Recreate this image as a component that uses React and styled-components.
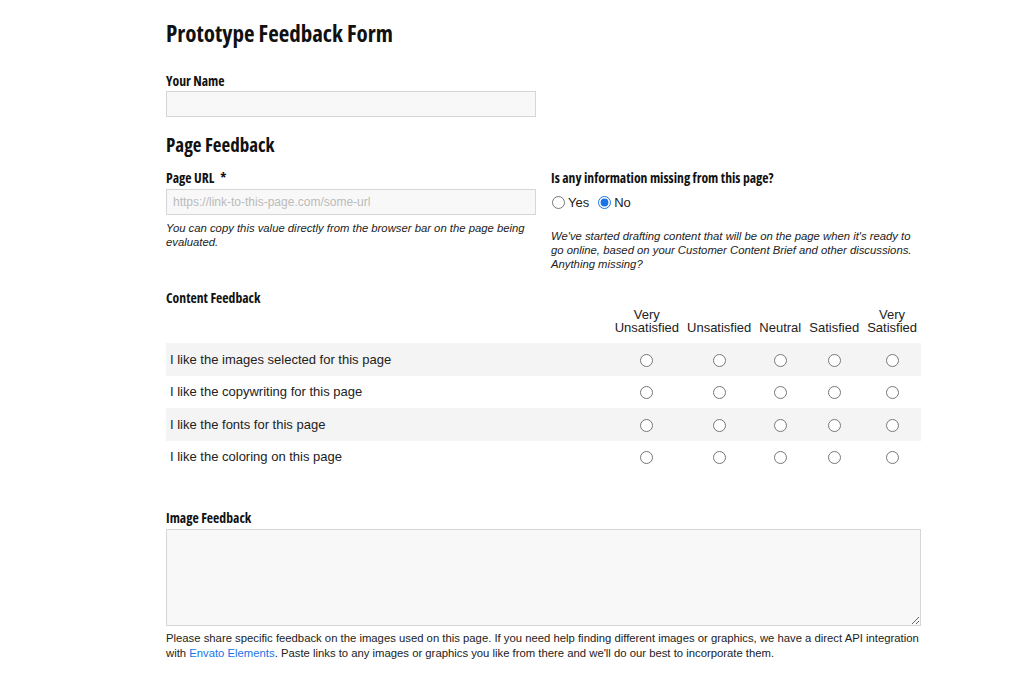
import styled, { createGlobalStyle } from "styled-components";

const GlobalStyle = createGlobalStyle`
	body {
		margin: 0;
		background: #fff;
		font-family: "Liberation Sans", Arial, sans-serif;
		color: #222;
	}
`;

const Page = styled.div`
	width: 755px;
	margin-left: 166px;
	padding-top: 19px;
	padding-bottom: 20px;
`;

const Title = styled.h1`
	margin: 0 0 25px;
	font-family: "Open Sans", sans-serif;
	font-stretch: 75%;
	font-weight: 700;
	font-size: 23px;
	line-height: 28px;
	color: #111;
`;

const SectionTitle = styled.h2`
	margin: 0 0 11px;
	font-family: "Open Sans", sans-serif;
	font-stretch: 75%;
	font-weight: 700;
	font-size: 19px;
	line-height: 26px;
	color: #111;
`;

const Label = styled.label`
	display: block;
	margin-bottom: ${(p) => (p.$mb !== undefined ? p.$mb : 2)}px;
	font-family: "Open Sans", sans-serif;
	font-stretch: 75%;
	font-weight: 700;
	font-size: 13.7px;
	line-height: 18px;
	color: #111;

	span {
		margin-left: 6px;
	}
`;

const Field = styled.div`
	margin-bottom: ${(p) => p.$mb || 0}px;
`;

const TextInput = styled.input`
	box-sizing: border-box;
	display: block;
	width: 370px;
	height: 26px;
	padding: 0 6px;
	border: 1px solid #d6d6d6;
	background: #f8f8f8;
	font-family: "Liberation Sans", Arial, sans-serif;
	font-size: 12px;
	color: #333;

	&::placeholder {
		color: #bbb;
	}
`;

const Columns = styled.div`
	display: grid;
	grid-template-columns: 370px 370px;
	column-gap: 15px;
	margin-bottom: 18px;
`;

const Help = styled.p`
	margin: ${(p) => p.$mt || 0}px 0 0;
	font-size: 11.3px;
	line-height: ${(p) => (p.$plain ? 15 : 14)}px;
	font-style: ${(p) => (p.$plain ? "normal" : "italic")};
	color: #222;

	a {
		color: #1a73e8;
		text-decoration: none;
	}
`;

const RadioGroup = styled.div`
	display: flex;
	align-items: center;
	gap: 8px;
	height: 20px;
	margin-top: 5px;
	font-size: 13px;
`;

const RadioOption = styled.label`
	display: flex;
	align-items: center;
	gap: 3px;

	input {
		margin: 0 0 0 1px;
		width: 13px;
		height: 13px;
		accent-color: #1a73e8;
	}
`;

const Table = styled.table`
	width: 100%;
	border-collapse: collapse;
	margin-bottom: 36px;
`;

const HeadCell = styled.th`
	padding: 0 4px 9px;
	font-weight: 400;
	font-size: 13px;
	line-height: 13px;
	text-align: center;
	vertical-align: bottom;
	white-space: nowrap;
	color: #222;
`;

const Row = styled.tr`
	background: ${(p) => (p.$shaded ? "#f4f4f4" : "#fff")};
	height: 32.5px;
`;

const Statement = styled.td`
	width: 100%;
	padding: 0 4px;
	font-size: 13px;
	white-space: nowrap;
	color: #222;
`;

const Choice = styled.td`
	text-align: center;

	input {
		margin: 0;
		width: 13px;
		height: 13px;
		vertical-align: middle;
	}
`;

const TextArea = styled.textarea`
	box-sizing: border-box;
	display: block;
	width: 755px;
	height: 97px;
	border: 1px solid #d6d6d6;
	background: #f8f8f8;
	resize: vertical;
`;

const scale = [
	["Very", "Unsatisfied"],
	["", "Unsatisfied"],
	["", "Neutral"],
	["", "Satisfied"],
	["Very", "Satisfied"],
];

const statements = [
	"I like the images selected for this page",
	"I like the copywriting for this page",
	"I like the fonts for this page",
	"I like the coloring on this page",
];

const App = () => {
	return (
		<>
			<GlobalStyle />
			<Page>
				<Title>Prototype Feedback Form</Title>

				<Field $mb={15}>
					<Label $mb={1}>Your Name</Label>
					<TextInput type="text" />
				</Field>

				<SectionTitle>Page Feedback</SectionTitle>
				<Columns>
					<div>
						<Label>
							Page URL<span>*</span>
						</Label>
						<TextInput
							type="text"
							placeholder="https://link-to-this-page.com/some-url"
						/>
						<Help $mt={6}>
							You can copy this value directly from the browser bar on the page
							being evaluated.
						</Help>
					</div>
					<div>
						<Label>Is any information missing from this page?</Label>
						<RadioGroup>
							<RadioOption>
								<input type="radio" name="missing" /> Yes
							</RadioOption>
							<RadioOption>
								<input type="radio" name="missing" defaultChecked /> No
							</RadioOption>
						</RadioGroup>
						<Help $mt={17}>
							We've started drafting content that will be on the page when it's
							ready to go online, based on your Customer Content Brief and other
							discussions. Anything missing?
						</Help>
					</div>
				</Columns>

				<Label $mb={1}>Content Feedback</Label>
				<Table>
					<thead>
						<tr>
							<th />
							{scale.map(([top, bottom], i) => (
								<HeadCell key={i}>
									{top}
									<br />
									{bottom}
								</HeadCell>
							))}
						</tr>
					</thead>
					<tbody>
						{statements.map((text, r) => (
							<Row key={r} $shaded={r % 2 === 0}>
								<Statement>{text}</Statement>
								{scale.map((_, c) => (
									<Choice key={c}>
										<input type="radio" name={`row-${r}`} />
									</Choice>
								))}
							</Row>
						))}
					</tbody>
				</Table>

				<Field>
					<Label>Image Feedback</Label>
					<TextArea />
					<Help $plain $mt={5}>
						Please share specific feedback on the images used on this page. If you
						need help finding different images or graphics, we have a direct API
						integration with <a href="#">Envato Elements</a>. Paste links to any
						images or graphics you like from there and we'll do our best to
						incorporate them.
					</Help>
				</Field>
			</Page>
		</>
	);
};

export default App;
